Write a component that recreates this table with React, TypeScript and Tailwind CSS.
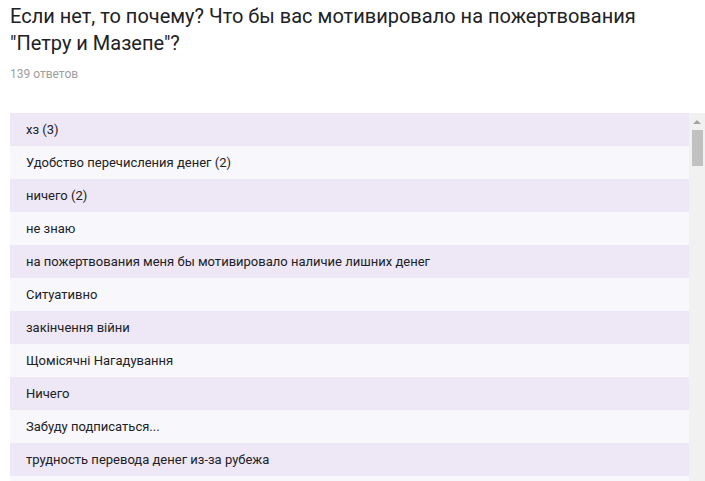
import React from "react";

const rows = [
  "хз (3)",
  "Удобство перечисления денег (2)",
  "ничего (2)",
  "не знаю",
  "на пожертвования меня бы мотивировало наличие лишних денег",
  "Ситуативно",
  "закінчення війни",
  "Щомісячні Нагадування",
  "Ничего",
  "Забуду подписаться...",
  "трудность перевода денег из-за рубежа",
  "",
];

export default function App() {
  return (
    <div
      className="w-[705px] h-[481px] overflow-hidden bg-white"
      style={{ fontFamily: "Roboto, 'Liberation Sans', sans-serif" }}
    >
      <div className="pl-[10px] pt-[3px] pr-4">
        <div className="text-[20px] leading-[27px] text-[#202124]">
          Если нет, то почему? Что бы вас мотивировало на пожертвования "Петру и Мазепе"?
        </div>
        <div className="mt-[9px] text-[12px] leading-[16px] text-[#9e9e9e]">139 ответов</div>
      </div>
      <div className="mt-[31px] ml-[10px] flex">
        <div className="flex-1 flex flex-col">
          {rows.map((r, i) => (
            <div
              key={i}
              className={`h-[33px] shrink-0 flex items-center pl-4 text-[13px] text-[#202124] ${
                i % 2 === 0 ? "bg-[#ede7f6]" : "bg-[#f8f7fc]"
              }`}
            >
              {r}
            </div>
          ))}
        </div>
        <div className="w-[16px] shrink-0 bg-[#f1f1f1] flex flex-col items-center">
          <svg width="16" height="17" viewBox="0 0 16 17" className="shrink-0">
            <polygon points="4,11 12,11 8,7" fill="#a3a3a3" />
          </svg>
          <div className="w-[11px] h-[36px] bg-[#c1c1c1]" />
        </div>
      </div>
    </div>
  );
}
